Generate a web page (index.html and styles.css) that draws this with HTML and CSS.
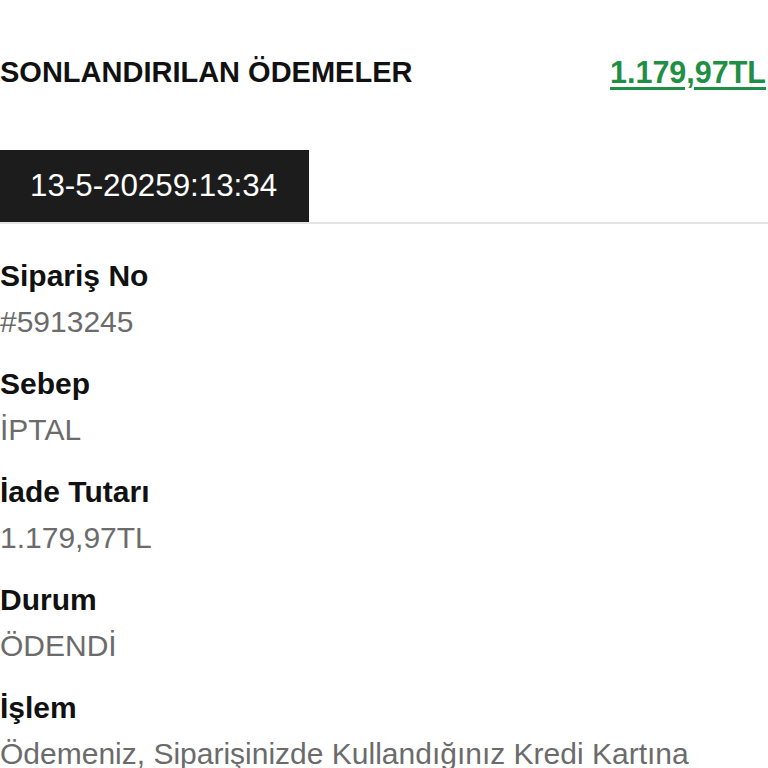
FILE: index.html
```html
<!DOCTYPE html>
<html lang="tr">
<head>
    <meta charset="UTF-8">
    <meta name="viewport" content="width=device-width, initial-scale=1.0">
    <title>Sonlandırılan Ödemeler</title>
    <link rel="stylesheet" href="styles.css">
</head>
<body>

<div class="page">
    <div class="header">
        <span class="header-title">SONLANDIRILAN ÖDEMELER</span>
        <a class="header-total" href="#">1.179,97TL</a>
    </div>

    <div class="tabs">
        <div class="tab active">13-5-20259:13:34</div>
    </div>

    <div class="details">
        <div class="field">
            <div class="field-label">Sipariş No</div>
            <div class="field-value">#5913245</div>
        </div>
        <div class="field">
            <div class="field-label">Sebep</div>
            <div class="field-value">İPTAL</div>
        </div>
        <div class="field">
            <div class="field-label">İade Tutarı</div>
            <div class="field-value">1.179,97TL</div>
        </div>
        <div class="field">
            <div class="field-label">Durum</div>
            <div class="field-value">ÖDENDİ</div>
        </div>
        <div class="field">
            <div class="field-label">İşlem</div>
            <div class="field-value">Ödemeniz, Siparişinizde Kullandığınız Kredi Kartına</div>
        </div>
    </div>
</div>

</body>
</html>
```

FILE: styles.css
```css
body {
    margin: 0;
    background-color: #ffffff;
    font-family: "Liberation Sans", Arial, sans-serif;
    color: #111111;
}

.page {
    padding-top: 49px;
}

.header {
    display: flex;
    justify-content: space-between;
    align-items: center;
    padding-right: 2px;
    line-height: 46px;
}

.header-title {
    font-size: 29px;
    font-weight: bold;
}

.header-total {
    font-size: 30.5px;
    font-weight: bold;
    color: #1e8f45;
    text-decoration: underline;
    text-underline-offset: 4px;
}

.tabs {
    display: flex;
    margin-top: 55px;
    border-bottom: 2px solid #e4e4e4;
}

.tab {
    height: 72px;
    line-height: 72px;
    padding: 0 32px 0 30px;
    font-size: 31.3px;
}

.tab.active {
    background-color: #1c1c1c;
    color: #ffffff;
}

.details {
    padding-top: 29px;
}

.field {
    margin-bottom: 16px;
}

.field-label {
    font-size: 30px;
    font-weight: bold;
    line-height: 46px;
}

.field-value {
    font-size: 30px;
    line-height: 46px;
    color: #6b6b6b;
    white-space: nowrap;
}
```
